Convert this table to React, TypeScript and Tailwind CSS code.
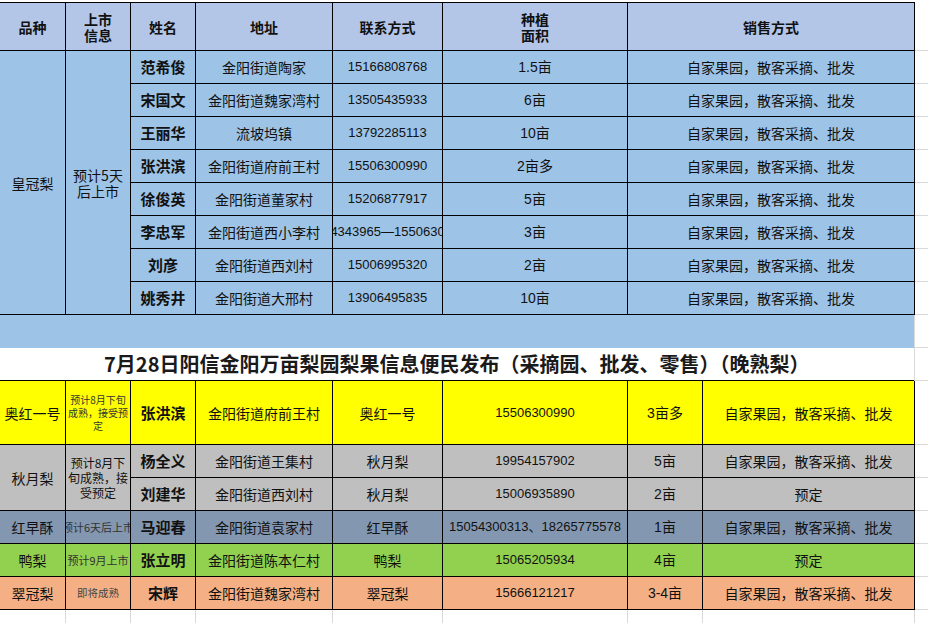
import React from "react";

const cell = "border border-black p-0 text-center align-middle";
const num = "font-['Liberation_Sans','Noto_Sans_CJK_SC',sans-serif] text-[13px]";
const mix = "font-['Liberation_Sans','Noto_Sans_CJK_SC',sans-serif]";
const grid = "border-b border-[#d9d9d9] bg-white";

const topRows = [
  ["范希俊", "金阳街道陶家", "15166808768", "1.5亩"],
  ["宋国文", "金阳街道魏家湾村", "13505435933", "6亩"],
  ["王丽华", "流坡坞镇", "13792285113", "10亩"],
  ["张洪滨", "金阳街道府前王村", "15506300990", "2亩多"],
  ["徐俊英", "金阳街道董家村", "15206877917", "5亩"],
  ["李忠军", "金阳街道西小李村", "34343965—15506300", "3亩"],
  ["刘彦", "金阳街道西刘村", "15006995320", "2亩"],
  ["姚秀井", "金阳街道大邢村", "13906495835", "10亩"],
];

function Clip({ children, className = "" }: { children: React.ReactNode; className?: string }) {
  // centred text that spills over both edges and gets cut, like the spreadsheet does
  return (
    <div className="flex w-full justify-center overflow-hidden">
      <span className={`shrink-0 whitespace-nowrap ${className}`}>{children}</span>
    </div>
  );
}

export default function App() {
  return (
    <div className="h-[623px] w-[928px] overflow-hidden bg-white pt-[2px] text-[14px] leading-[16px] text-[#111] font-['Noto_Sans_CJK_SC',sans-serif]">
      <table className="-ml-px w-[932px] table-fixed border-collapse">
        <colgroup>
          <col className="w-[66px]" />
          <col className="w-[65px]" />
          <col className="w-[65px]" />
          <col className="w-[137px]" />
          <col className="w-[110px]" />
          <col className="w-[185px]" />
          <col className="w-[75px]" />
          <col className="w-[212px]" />
          <col className="w-[17px]" />
        </colgroup>
        <tbody>
          {/* Header */}
          <tr className="h-[48px] bg-[#b4c6e7] font-bold">
            <td className={cell}>品种</td>
            <td className={cell}>
              上市
              <br />
              信息
            </td>
            <td className={cell}>姓名</td>
            <td className={cell}>地址</td>
            <td className={cell}>联系方式</td>
            <td className={cell}>
              种植
              <br />
              面积
            </td>
            <td className={cell} colSpan={2}>
              销售方式
            </td>
            <td className={grid} />
          </tr>

          {/* 皇冠梨 */}
          {topRows.map((r, i) => (
            <tr key={r[0]} className="h-[33px] bg-[#9dc3e6]">
              {i === 0 && (
                <>
                  <td className={cell} rowSpan={8}>
                    皇冠梨
                  </td>
                  <td className={cell} rowSpan={8}>
                    预计5天
                    <br />
                    后上市
                  </td>
                </>
              )}
              <td className={`${cell} text-[15px] font-bold`}>{r[0]}</td>
              <td className={cell}>{r[1]}</td>
              <td className={`${cell} ${num}`}>
                <Clip>{r[2]}</Clip>
              </td>
              <td className={`${cell} ${mix}`}>{r[3]}</td>
              <td className={cell} colSpan={2}>
                自家果园，散客采摘、批发
              </td>
              <td className={grid} />
            </tr>
          ))}

          {/* blank band */}
          <tr className="h-[33px]">
            <td colSpan={8} className="border-r border-[#d9d9d9] bg-[#9dc3e6]" />
            <td className={grid} />
          </tr>

          {/* Title */}
          <tr className="h-[33px]">
            <td colSpan={8} className="border-r border-[#d9d9d9] bg-white p-0 text-center align-middle text-[20px] font-bold text-[#1a1a1a]">
              7月28日阳信金阳万亩梨园梨果信息便民发布（采摘园、批发、零售）（晚熟梨）
            </td>
            <td className={grid} />
          </tr>

          {/* 奥红一号 */}
          <tr className="h-[64px] bg-[#ffff00]">
            <td className={cell}>奥红一号</td>
            <td className={`${cell} text-[10px] leading-[13px] text-[#333]`}>
              预计8月下旬
              <br />
              成熟，接受预
              <br />
              定
            </td>
            <td className={`${cell} text-[15px] font-bold`}>张洪滨</td>
            <td className={cell}>金阳街道府前王村</td>
            <td className={cell}>奥红一号</td>
            <td className={`${cell} ${num}`}>15506300990</td>
            <td className={`${cell} ${mix}`}>3亩多</td>
            <td className={cell}>自家果园，散客采摘、批发</td>
            <td className={grid} />
          </tr>

          {/* 秋月梨 */}
          <tr className="h-[33px] bg-[#bfbfbf]">
            <td className={cell} rowSpan={2}>
              秋月梨
            </td>
            <td className={`${cell} text-[12px] leading-[15px]`} rowSpan={2}>
              预计8月下
              <br />
              旬成熟，接
              <br />
              受预定
            </td>
            <td className={`${cell} text-[15px] font-bold`}>杨全义</td>
            <td className={cell}>金阳街道王集村</td>
            <td className={cell}>秋月梨</td>
            <td className={`${cell} ${num}`}>19954157902</td>
            <td className={`${cell} ${mix}`}>5亩</td>
            <td className={cell}>自家果园，散客采摘、批发</td>
            <td className={grid} />
          </tr>
          <tr className="h-[33px] bg-[#bfbfbf]">
            <td className={`${cell} text-[15px] font-bold`}>刘建华</td>
            <td className={cell}>金阳街道西刘村</td>
            <td className={cell}>秋月梨</td>
            <td className={`${cell} ${num}`}>15006935890</td>
            <td className={`${cell} ${mix}`}>2亩</td>
            <td className={cell}>预定</td>
            <td className={grid} />
          </tr>

          {/* 红早酥 */}
          <tr className="h-[33px] bg-[#8497b0]">
            <td className={cell}>红早酥</td>
            <td className={`${cell} text-[11px] text-[#333]`}>
              <Clip>预计6天后上市</Clip>
            </td>
            <td className={`${cell} text-[15px] font-bold`}>马迎春</td>
            <td className={cell}>金阳街道袁家村</td>
            <td className={cell}>红早酥</td>
            <td className={`${cell} ${num}`}>15054300313、18265775578</td>
            <td className={`${cell} ${mix}`}>1亩</td>
            <td className={cell}>自家果园，散客采摘、批发</td>
            <td className={grid} />
          </tr>

          {/* 鸭梨 */}
          <tr className="h-[33px] bg-[#92d050]">
            <td className={cell}>鸭梨</td>
            <td className={`${cell} text-[11px] text-[#333]`}>预计9月上市</td>
            <td className={`${cell} text-[15px] font-bold`}>张立明</td>
            <td className={cell}>金阳街道陈本仁村</td>
            <td className={cell}>鸭梨</td>
            <td className={`${cell} ${num}`}>15065205934</td>
            <td className={`${cell} ${mix}`}>4亩</td>
            <td className={cell}>预定</td>
            <td className={grid} />
          </tr>

          {/* 翠冠梨 */}
          <tr className="h-[33px] bg-[#f4b084]">
            <td className={cell}>翠冠梨</td>
            <td className={`${cell} text-[10.5px] text-[#444]`}>即将成熟</td>
            <td className={`${cell} text-[15px] font-bold`}>宋辉</td>
            <td className={cell}>金阳街道魏家湾村</td>
            <td className={cell}>翠冠梨</td>
            <td className={`${cell} ${num}`}>15666121217</td>
            <td className={`${cell} ${mix}`}>3-4亩</td>
            <td className={cell}>自家果园，散客采摘、批发</td>
            <td className={grid} />
          </tr>

          {/* empty sheet row */}
          <tr className="h-[20px]">
            {Array.from({ length: 8 }).map((_, i) => (
              <td key={i} className="border-x border-[#d9d9d9] bg-white" />
            ))}
            <td className="bg-white" />
          </tr>
        </tbody>
      </table>
    </div>
  );
}
